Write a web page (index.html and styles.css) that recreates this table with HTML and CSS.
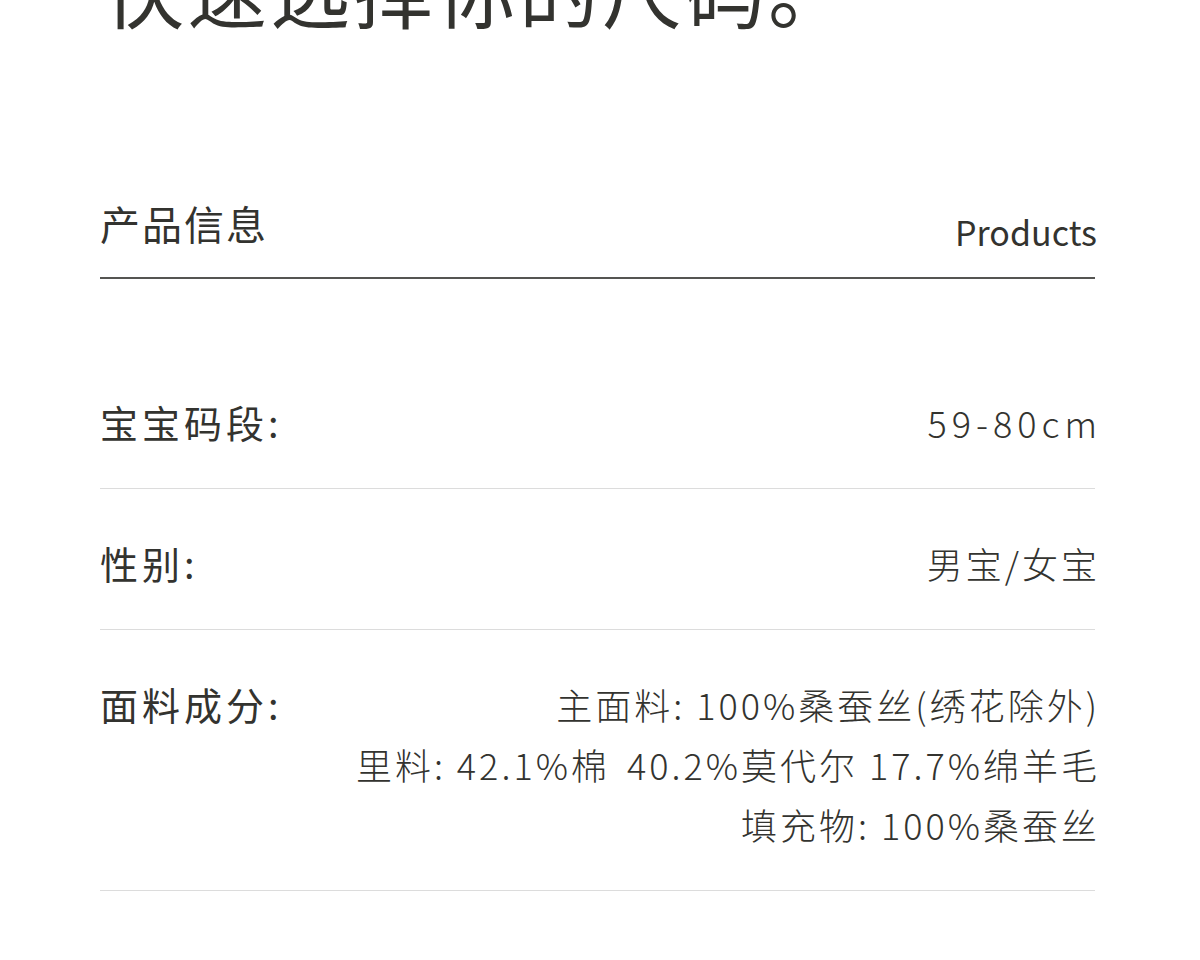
FILE: index.html
```html
<!DOCTYPE html>
<html lang="zh-CN">
<head>
<meta charset="utf-8">
<link rel="stylesheet" href="styles.css">
</head>
<body>
<div class="page">
  <h1 class="hero">快速选择你的尺码。</h1>
  <div class="section-head">
    <div class="section-title">产品信息</div>
    <div class="section-en">Products</div>
  </div>
  <div class="row">
    <div class="label">宝宝码段:</div>
    <div class="value"><div class="wide">59-80cm</div></div>
  </div>
  <div class="row">
    <div class="label">性别:</div>
    <div class="value"><div>男宝/女宝</div></div>
  </div>
  <div class="row">
    <div class="label">面料成分:</div>
    <div class="value">
      <div>主面料: 100%桑蚕丝(绣花除外)</div>
      <div>里料: 42.1%棉 <span class="gap"></span>40.2%莫代尔 17.7%绵羊毛</div>
      <div>填充物: 100%桑蚕丝</div>
    </div>
  </div>
</div>
</body>
</html>
```
FILE: styles.css
```css
html, body {
  margin: 0;
  padding: 0;
  background: #ffffff;
}
body {
  font-family: "Noto Sans CJK SC", "Noto Sans", sans-serif;
  color: #33332f;
  overflow: hidden;
}
.page {
  width: 995px;
  margin-left: 100px;
}
.hero {
  margin: -53px 0 0 0;
  font-size: 80px;
  line-height: 80px;
  font-weight: 400;
  letter-spacing: 3px;
  padding-left: 4px;
  white-space: nowrap;
}
.section-head {
  margin-top: 172px;
  display: flex;
  justify-content: space-between;
  align-items: flex-end;
  padding-bottom: 30px;
  border-bottom: 2px solid #555552;
}
.section-title {
  font-size: 40px;
  line-height: 48px;
  letter-spacing: 2px;
  font-weight: 400;
}
.section-en {
  font-size: 34px;
  line-height: 40px;
  margin-right: -2px;
  margin-bottom: -5px;
  font-weight: 400;
}
.row {
  display: flex;
  justify-content: space-between;
  align-items: flex-start;
  padding: 44px 0 36px;
  border-bottom: 1px solid #dcdcdc;
}
.section-head + .row {
  margin-top: 69px;
}
.label {
  font-size: 38px;
  line-height: 60px;
  letter-spacing: 4px;
  white-space: nowrap;
  font-weight: 400;
}
.value {
  font-size: 36px;
  line-height: 60px;
  letter-spacing: 3px;
  text-align: right;
  margin-right: -5px;
  white-space: nowrap;
  font-weight: 300;
}
.wide {
  letter-spacing: 5px;
  margin-right: -2px;
}
.gap {
  display: inline-block;
  width: 6px;
}
```
